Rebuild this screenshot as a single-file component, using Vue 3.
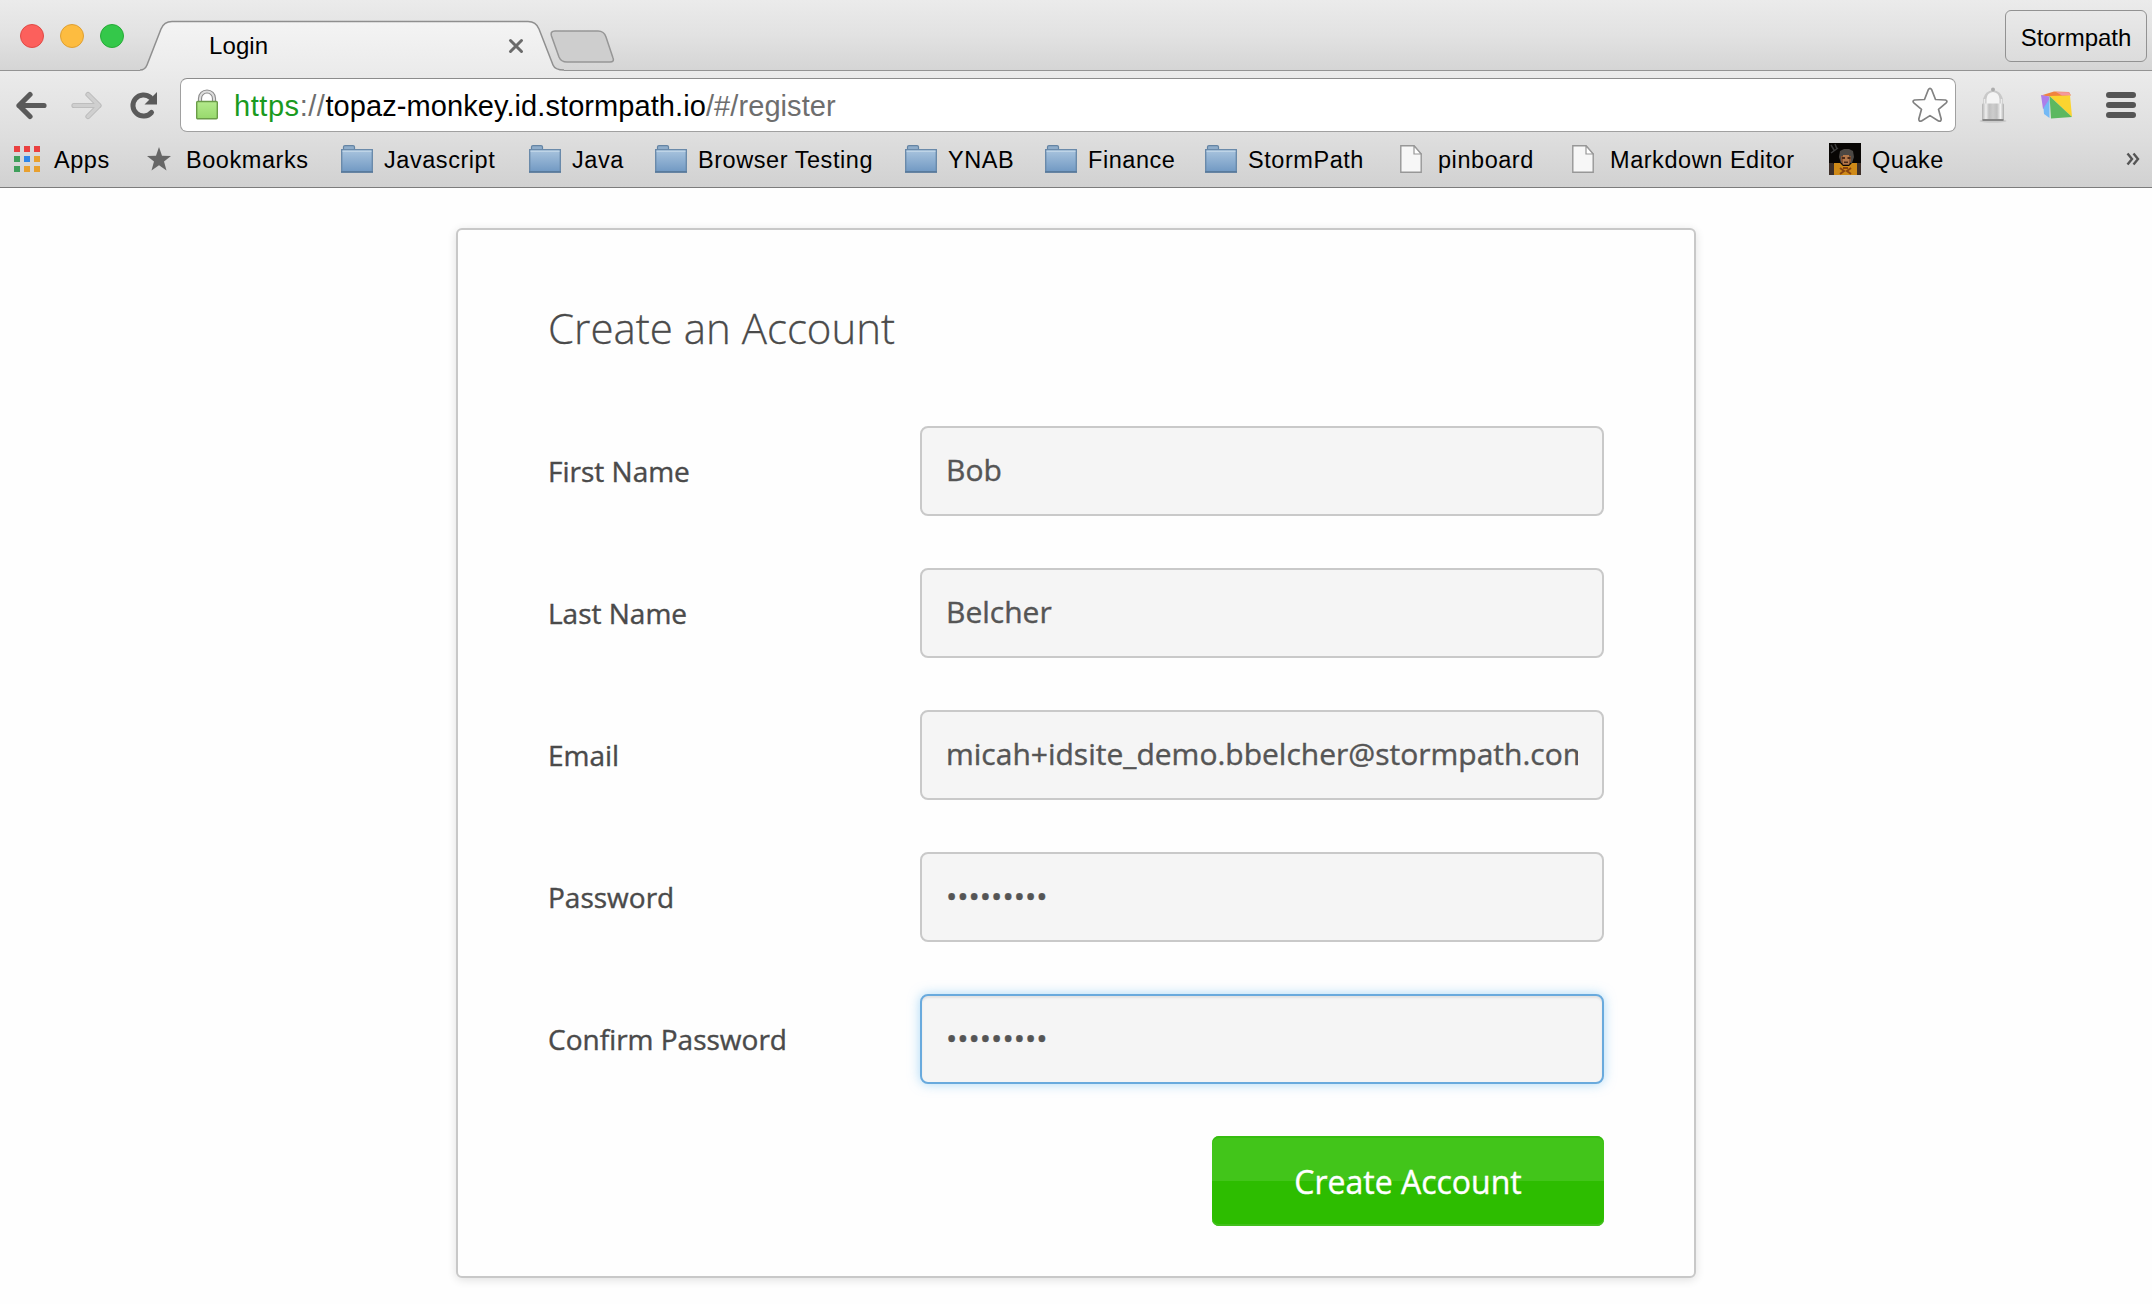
<template>
  <div class="window">
    <!-- tab strip -->
    <div class="tab-strip">
      <div class="lights">
        <span class="light red"></span>
        <span class="light yellow"></span>
        <span class="light green"></span>
      </div>
      <div class="tab">
        <svg class="tab-shape" width="424" height="52" viewBox="0 0 424 52">
          <defs>
            <linearGradient id="tabFill" x1="0" y1="0" x2="0" y2="1">
              <stop offset="0" stop-color="#f4f4f4" />
              <stop offset="1" stop-color="#ebebeb" />
            </linearGradient>
          </defs>
          <path d="M0 52V50Q5 50 7 45L21 9Q24 1.500 32 1.500H388Q396 1.500 399 9L413 45Q415 50 424 50V52Z" fill="url(#tabFill)" />
          <path d="M0 50Q5 50 7 45L21 9Q24 1.500 32 1.500H388Q396 1.500 399 9L413 45Q415 50 424 50" fill="none" stroke="#8f8f8f" stroke-width="1.500" />
        </svg>
        <span class="tab-title">Login</span>
        <svg class="tab-close" width="16" height="16" viewBox="0 0 16 16">
          <path d="M2.500 2.500L13.500 13.500M13.500 2.500L2.500 13.500" stroke="#6a6a6a" stroke-width="3" stroke-linecap="round" />
        </svg>
      </div>
      <svg class="new-tab" width="66" height="34" viewBox="0 0 66 34">
        <path d="M5 1H48Q54 1 56 7L63 28Q64.500 32 60 32H17Q11 32 9 27L1.500 6Q0 1 5 1Z" fill="#cecece" stroke="#969696" stroke-width="1.500" />
      </svg>
      <button class="profile">Stormpath</button>
    </div>

    <!-- toolbar -->
    <div class="toolbar">
      <div class="nav">
        <svg class="back" width="32" height="30" viewBox="0 0 32 30">
          <path d="M4 14.500H29M15 3.500L4 14.500L15 25.500" fill="none" stroke="#5a5a5a" stroke-width="5.200" stroke-linecap="round" stroke-linejoin="round" />
        </svg>
        <svg class="forward" width="32" height="30" viewBox="0 0 32 30">
          <path d="M3 14.500H28M17 3.500L28 14.500L17 25.500" fill="none" stroke="#b9b9b9" stroke-width="5.200" stroke-linecap="round" stroke-linejoin="round" />
          <path d="M3 14.500H28M17 3.500L28 14.500L17 25.500" fill="none" stroke="#cfcfcf" stroke-width="3.400" stroke-linecap="round" stroke-linejoin="round" />
        </svg>
        <svg class="reload" width="30" height="30" viewBox="0 0 30 30">
          <path d="M22.500 21.500A10.600 10.600 0 1 1 21.500 6.500" fill="none" stroke="#5a5a5a" stroke-width="5" stroke-linecap="round" />
          <path d="M28 1V13.500H15.500Z" fill="#5a5a5a" />
        </svg>
      </div>
      <div class="omnibox">
        <svg class="lock" width="24" height="32" viewBox="0 0 24 32">
          <defs>
            <linearGradient id="lockFill" x1="0" y1="0" x2="0" y2="1">
              <stop offset="0" stop-color="#b4ea8c" />
              <stop offset="1" stop-color="#97d96c" />
            </linearGradient>
          </defs>
          <path d="M5 14V9.500A7 7 0 0 1 19 9.500V14" fill="none" stroke="#8c8c8c" stroke-width="4.200" />
          <path d="M5 14V9.500A7 7 0 0 1 19 9.500V14" fill="none" stroke="#dedede" stroke-width="2" />
          <rect x="1.700" y="12.500" width="20.600" height="17.300" rx="1" fill="url(#lockFill)" stroke="#6a9c48" stroke-width="1.400" />
        </svg>
        <div class="url"><span class="scheme"><span class="secure">https</span><span class="dim">://</span></span>topaz-monkey.id.stormpath.io<span class="dim">/#/register</span></div>
        <svg class="fav" width="38" height="36" viewBox="0 0 38 36">
          <path d="M17.300 2.800Q19 0 20.700 2.800L24.500 12.500L34.500 13Q37 13.800 35.200 15.800L27.500 22.300L30.200 32Q30.200 34.900 27.500 34L19 28.600L10.500 34Q7.800 34.900 7.800 32L10.500 22.300L2.800 15.800Q1 13.800 3.500 13L13.500 12.500Z" fill="#fff" stroke="#828282" stroke-width="1.700" stroke-linejoin="round" />
        </svg>
      </div>
      <div class="extensions">
        <svg width="28" height="38" viewBox="0 0 28 38">
          <defs>
            <linearGradient id="padlockFill" x1="0" y1="0" x2="1" y2="0">
              <stop offset="0" stop-color="#b0b0b0" />
              <stop offset=".18" stop-color="#efefef" />
              <stop offset=".32" stop-color="#c0c0c0" />
              <stop offset=".5" stop-color="#cdcdcd" />
              <stop offset=".68" stop-color="#c0c0c0" />
              <stop offset=".84" stop-color="#f2f2f2" />
              <stop offset="1" stop-color="#adadad" />
            </linearGradient>
          </defs>
          <ellipse cx="14" cy="35" rx="13.500" ry="1.800" fill="#cacaca" />
          <path d="M4 20V13Q6 5 14 4Q22 5 24 13V20Z" fill="#c9c9c9" />
          <path d="M7.500 18V13Q8 6.500 14 6Q20 6.500 20.500 13V18Z" fill="#f4f4f4" />
          <path d="M5.500 18V13M22.500 18V13" stroke="#eaeaea" stroke-width="1.500" />
          <circle cx="14" cy="3.500" r="2" fill="#adadad" />
          <rect x="3" y="17.500" width="22" height="17" rx="1" fill="url(#padlockFill)" />
          <path d="M3.500 34H24.500" stroke="#858585" stroke-width="2" />
        </svg>
        <svg width="32" height="28" viewBox="0 0 32 28">
          <path d="M0 4.500L13 .5L28 1L30 4.500L9 5.500Z" fill="#f0843f" />
          <path d="M0 4L8.500 5.500L7 15L2 18Z" fill="#ac7eea" />
          <path d="M8.500 8V27L3 23L2.500 17Z" fill="#74b9f5" />
          <path d="M8.500 5L29 4.500L31 26Z" fill="#fbd42f" />
          <path d="M8.500 5L31 26L10 27.500Z" fill="#5cb860" />
          <path d="M15 1L28 1.300L29.500 4L21 4.500Z" fill="#f4989a" />
        </svg>
        <svg width="30" height="28" viewBox="0 0 30 28">
          <path d="M3 4H27M3 14H27M3 24H27" stroke="#555" stroke-width="6" stroke-linecap="round" />
        </svg>
      </div>
    </div>

    <!-- bookmarks bar -->
    <div class="bookmarks">
      <div v-for="item in bookmarks" :key="item.label" class="bookmark" :class="'bookmark-' + item.icon">
        <svg v-if="item.icon === 'apps'" width="26" height="26" viewBox="0 0 26 26">
          <rect v-for="(color, i) in appColors" :key="i" :x="(i % 3) * 10" :y="Math.floor(i / 3) * 10" width="6" height="6" :fill="color" />
        </svg>
        <svg v-else-if="item.icon === 'star'" width="24" height="24" viewBox="0 0 24 24">
          <path d="M12 0L15 8.700L24 9L17 14.500L19.500 23.500L12 18.300L4.500 23.500L7 14.500L0 9L9 8.700Z" fill="#666" />
        </svg>
        <svg v-else-if="item.icon === 'folder'" width="32" height="28" viewBox="0 0 32 28">
          <defs>
            <linearGradient id="folderFill" x1="0" y1="0" x2="0" y2="1">
              <stop offset="0" stop-color="#a9c4de" />
              <stop offset="1" stop-color="#7199c3" />
            </linearGradient>
          </defs>
          <path d="M2.500 5V2Q2.500 .7 4 .7H12Q13.500 .7 13.500 2V5" fill="#8fadca" stroke="#6484a3" stroke-width="1.200" />
          <rect x=".7" y="4.700" width="30.600" height="22" fill="url(#folderFill)" stroke="#6a8aaa" stroke-width="1.400" />
          <path d="M1.500 6.200H30.500" stroke="#c5d9ea" stroke-width="1.200" />
          <path d="M0 27H32" stroke="#56779a" stroke-width="1.600" />
        </svg>
        <svg v-else-if="item.icon === 'page'" width="22" height="28" viewBox="0 0 22 28">
          <path d="M.8 .8H14L21.200 9V27.200H.8Z" fill="#f7f7f7" stroke="#979797" stroke-width="1.400" />
          <path d="M14 .8V9H21.200Z" fill="#fff" stroke="#979797" stroke-width="1.200" />
        </svg>
        <svg v-else width="32" height="32" viewBox="0 0 32 32">
          <rect width="32" height="32" fill="#080604" />
          <path d="M2 2L5 7M6 1L8 6M2 10L9 5" stroke="#3c3c3c" stroke-width="1.500" />
          <path d="M10 14L11 8L15 6H20L24 8L25 14L23 20H12Z" fill="#4c4844" />
          <path d="M12 13H22V18L20 22H14L12 18Z" fill="#8a5534" />
          <path d="M14 12H20V21H14Z" fill="#b4784a" />
          <path d="M13 14H16V16H13ZM18.500 14H21.500V16H18.500ZM15 18.500H19V20H15Z" fill="#4a2a18" />
          <path d="M0 20H4L6 22V32H0ZM32 20H28L26 23V32H32Z" fill="#3e302a" />
          <path d="M5 20H11L14 23H20L23 20H28V32H5Z" fill="#cf8a18" />
          <path d="M11 25L15 28L11 31M22 25L18 28L22 31M14 25H19" fill="none" stroke="#8a4410" stroke-width="2" />
        </svg>
        <span>{{ item.label }}</span>
      </div>
      <svg class="more" width="14" height="14" viewBox="0 0 14 14">
        <path d="M1.500 1.500L6 7L1.500 12.500M7.500 1.500L12 7L7.500 12.500" fill="none" stroke="#555" stroke-width="2.400" />
      </svg>
    </div>

    <!-- registration form -->
    <main class="content">
      <form class="card" @submit.prevent>
        <h1>Create an Account</h1>
        <div v-for="field in fields" :key="field.id" class="field">
          <label :for="field.id">{{ field.label }}</label>
          <input
            :id="field.id"
            v-model="field.value"
            :type="field.type"
            :class="{ active: field.id === activeField }"
            spellcheck="false"
            @focus="activeField = field.id"
          />
        </div>
        <button class="submit" type="submit">Create Account</button>
      </form>
    </main>
  </div>
</template>

<script setup>
import { ref } from 'vue';

const bookmarks = [
  { label: 'Apps', icon: 'apps' },
  { label: 'Bookmarks', icon: 'star' },
  { label: 'Javascript', icon: 'folder' },
  { label: 'Java', icon: 'folder' },
  { label: 'Browser Testing', icon: 'folder' },
  { label: 'YNAB', icon: 'folder' },
  { label: 'Finance', icon: 'folder' },
  { label: 'StormPath', icon: 'folder' },
  { label: 'pinboard', icon: 'page' },
  { label: 'Markdown Editor', icon: 'page' },
  { label: 'Quake', icon: 'quake' }
];

const appColors = [
  '#ea4040', '#ea4040', '#ea4040',
  '#3f9f5b', '#2f86e8', '#e8a02f',
  '#3f9f5b', '#e8a02f', '#e8a02f'
];

const fields = ref([
  { id: 'firstName', label: 'First Name', type: 'text', value: 'Bob' },
  { id: 'lastName', label: 'Last Name', type: 'text', value: 'Belcher' },
  { id: 'email', label: 'Email', type: 'text', value: 'micah+idsite_demo.bbelcher@stormpath.com' },
  { id: 'password', label: 'Password', type: 'password', value: 'burgers12' },
  { id: 'confirm', label: 'Confirm Password', type: 'password', value: 'burgers12' }
]);

const activeField = ref('confirm');
</script>

<style>
body {
  margin: 0;
  background: #fefefe;
}
</style>

<style scoped>
.window {
  height: 1304px;
  overflow: hidden;
  display: flex;
  flex-direction: column;
  font-family: "Liberation Sans", Arial, sans-serif;
  color: #000;
}

.window svg {
  display: block;
  flex: none;
}

/* tab strip */
.tab-strip {
  flex: none;
  box-sizing: border-box;
  height: 71px;
  padding: 0 5px 0 20px;
  display: flex;
  align-items: flex-start;
  background: linear-gradient(#ebebeb, #e2e2e2 50%, #d5d5d5);
  border-bottom: 1px solid #939393;
}

.lights {
  display: flex;
  gap: 16px;
  padding-top: 24px;
  width: 120px;
}

.light {
  box-sizing: border-box;
  width: 24px;
  height: 24px;
  border-radius: 50%;
}

.red { background: #fc605c; border: 1px solid #e04a46; }
.yellow { background: #fdbc40; border: 1px solid #dfa033; }
.green { background: #34c84a; border: 1px solid #27ab37; }

.tab {
  position: relative;
  box-sizing: border-box;
  width: 424px;
  height: 52px;
  margin-top: 20px;
  padding: 0 40px 0 69px;
  display: flex;
  align-items: center;
  justify-content: space-between;
}

.tab-shape {
  position: absolute;
  left: 0;
  top: 0;
}

.tab-title {
  position: relative;
  font-size: 24px;
  letter-spacing: 0.1px;
}

.tab-close {
  position: relative;
}

.new-tab {
  margin: 30px 0 0 -14px;
}

.profile {
  box-sizing: border-box;
  width: 142px;
  height: 52px;
  margin: 10px 0 0 auto;
  padding: 4px 0 0;
  border: 1px solid #929292;
  border-radius: 6px;
  background: linear-gradient(#e9e9e9, #dcdcdc);
  font: 24px "Liberation Sans", Arial, sans-serif;
  color: #000;
}

/* toolbar */
.toolbar {
  flex: none;
  box-sizing: border-box;
  height: 66px;
  padding: 7px 16px 0 15px;
  display: flex;
  background: linear-gradient(#ebebeb, #dedede);
}

.nav {
  display: flex;
  width: 165px;
  padding-top: 13px;
}

.forward { margin-left: 24px; }
.reload { margin-left: 26px; }

.omnibox {
  box-sizing: border-box;
  width: 1776px;
  height: 54px;
  padding: 0 6px 0 14px;
  display: flex;
  align-items: center;
  background: #fff;
  border: 1px solid #a0a0a0;
  border-top-color: #8c8c8c;
  border-radius: 7px;
}

.url {
  flex: 1;
  margin-left: 15px;
  padding-top: 3px;
  font-size: 29px;
  letter-spacing: 0.08px;
}

.scheme { letter-spacing: 0.55px; }
.secure { color: #1a9a20; }
.dim { color: #6e6e6e; }

.extensions {
  flex: 1;
  display: flex;
  align-items: center;
  justify-content: space-between;
  height: 54px;
  padding-left: 23px;
}

/* bookmarks bar */
.bookmarks {
  flex: none;
  box-sizing: border-box;
  height: 51px;
  padding: 0 12px 7px 14px;
  display: grid;
  grid-template-columns: 133px 194px 188px 126px 250px 140px 160px 195px 172px 257px 1fr 14px;
  align-items: center;
  background: linear-gradient(#dedede, #d1d1d1);
  border-bottom: 1px solid #7c7c7c;
}

.bookmark {
  display: flex;
  align-items: center;
  gap: 11px;
  height: 32px;
  font-size: 23.5px;
  letter-spacing: 0.55px;
  white-space: nowrap;
}

.bookmark span {
  padding-top: 4px;
}

.bookmark-apps { gap: 14px; }
.bookmark-star { gap: 15px; }
.bookmark-page { gap: 16px; }

/* page content */
.content {
  flex: 1;
  display: flex;
  justify-content: center;
  align-items: flex-start;
  padding-top: 40px;
  background: #fefefe;
  font-family: "Open Sans", sans-serif;
  color: #4a4a4a;
}

.card {
  box-sizing: border-box;
  width: 1240px;
  height: 1050px;
  padding: 62px 90px 0;
  display: flex;
  flex-direction: column;
  border: 2px solid #c8c8c8;
  border-radius: 6px;
  background: #fefefe;
  box-shadow: 0 2px 10px rgba(0, 0, 0, 0.12);
}

h1 {
  margin: 0 0 74px;
  height: 60px;
  line-height: 72px;
  font-size: 42px;
  font-weight: 300;
  -webkit-text-stroke: 0.3px #4a4a4a;
}

.field {
  flex: none;
  display: flex;
  align-items: center;
  height: 90px;
  margin-bottom: 52px;
}

label {
  width: 372px;
  font-size: 28px;
  -webkit-text-stroke: 0.4px #4a4a4a;
}

input {
  box-sizing: border-box;
  width: 684px;
  height: 90px;
  padding: 0 24px 3px;
  border: 2px solid #c9c9c9;
  border-radius: 8px;
  outline: none;
  background: #f5f5f5;
  font: 30px "Open Sans", sans-serif;
  color: #555;
  -webkit-text-stroke: 0.4px #555;
}

input.active {
  border-color: #69aadd;
  box-shadow: inset 0 2px 2px rgba(0, 0, 0, 0.075), 0 0 12px rgba(102, 185, 240, 0.55);
}

.submit {
  align-self: flex-end;
  width: 392px;
  height: 90px;
  padding: 0;
  border: 0;
  border-radius: 7px;
  background: linear-gradient(#42c51a 50%, #2dbd00 50%);
  box-shadow: inset 0 2px #36bd0f, inset 0 -2px #42c01c;
  font: 32px "Open Sans", sans-serif;
  color: #fff;
  -webkit-text-stroke: 0.4px #fff;
}
</style>
